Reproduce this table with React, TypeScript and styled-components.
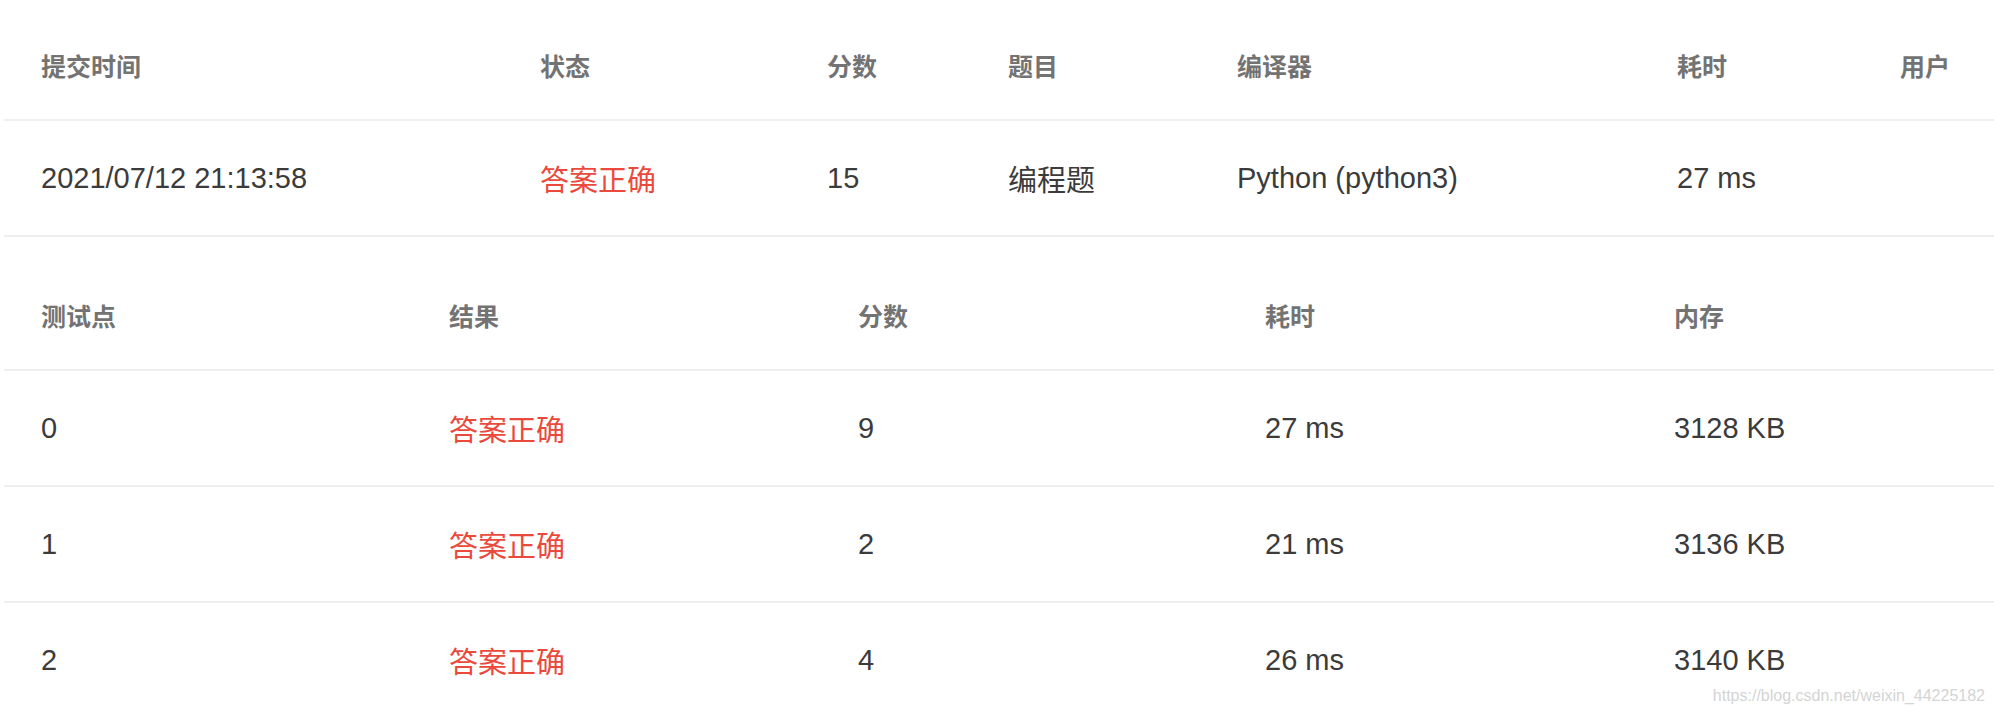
import React from "react";
import styled, { createGlobalStyle } from "styled-components";

const Global = createGlobalStyle`
  html, body { margin: 0; padding: 0; background: #ffffff; }
  body { font-family: "Liberation Sans", "Noto Sans CJK SC", sans-serif; }
`;

const Page = styled.div`
  position: relative;
  width: 1994px;
  height: 716px;
  overflow: hidden;
  padding: 5px 0 0 4px;
  box-sizing: border-box;
  display: flex;
  flex-direction: column;
  gap: 18px;
`;

const Table = styled.div<{ $cols: string }>`
  display: grid;
  grid-template-columns: ${(p) => p.$cols};
`;

const Cell = styled.div<{ $head?: boolean; $red?: boolean }>`
  height: 116px;
  box-sizing: border-box;
  border-bottom: 2px solid #efefef;
  display: flex;
  align-items: center;
  padding-left: 37px;
  padding-top: ${(p) => (p.$head ? "6px" : "0")};
  padding-bottom: 0;
  white-space: nowrap;
  font-family: "Liberation Sans", "Noto Sans CJK SC", sans-serif;
  font-size: ${(p) => (p.$head ? "25px" : "29px")};
  font-weight: ${(p) => (p.$head ? 700 : 400)};
  color: ${(p) => (p.$head ? "#737373" : p.$red ? "#ea4a3c" : "#3b3b3b")};
`;

const Watermark = styled.div`
  position: absolute;
  right: 9px;
  top: 687px;
  font-family: "Liberation Sans", sans-serif;
  font-size: 16px;
  color: #d4d4d4;
  white-space: nowrap;
`;

const submitHead = ["提交时间", "状态", "分数", "题目", "编译器", "耗时", "用户"];
const submitRow = [
  { t: "2021/07/12 21:13:58" },
  { t: "答案正确", red: true },
  { t: "15" },
  { t: "编程题" },
  { t: "Python (python3)" },
  { t: "27 ms" },
  { t: "" },
];

const caseHead = ["测试点", "结果", "分数", "耗时", "内存"];
const caseRows = [
  ["0", "答案正确", "9", "27 ms", "3128 KB"],
  ["1", "答案正确", "2", "21 ms", "3136 KB"],
  ["2", "答案正确", "4", "26 ms", "3140 KB"],
];

export default function App() {
  return (
    <>
      <Global />
      <Page>
        <Table $cols="499px 287px 181px 229px 440px 223px 1fr">
          {submitHead.map((h) => (
            <Cell key={h} $head>
              {h}
            </Cell>
          ))}
          {submitRow.map((c, i) => (
            <Cell key={i} $red={c.red}>
              {c.t}
            </Cell>
          ))}
        </Table>
        <Table $cols="408px 409px 407px 409px 1fr">
          {caseHead.map((h) => (
            <Cell key={h} $head>
              {h}
            </Cell>
          ))}
          {caseRows.map((r, ri) =>
            r.map((v, ci) => (
              <Cell key={`${ri}-${ci}`} $red={ci === 1}>
                {v}
              </Cell>
            ))
          )}
        </Table>
        <Watermark>https://blog.csdn.net/weixin_44225182</Watermark>
      </Page>
    </>
  );
}
